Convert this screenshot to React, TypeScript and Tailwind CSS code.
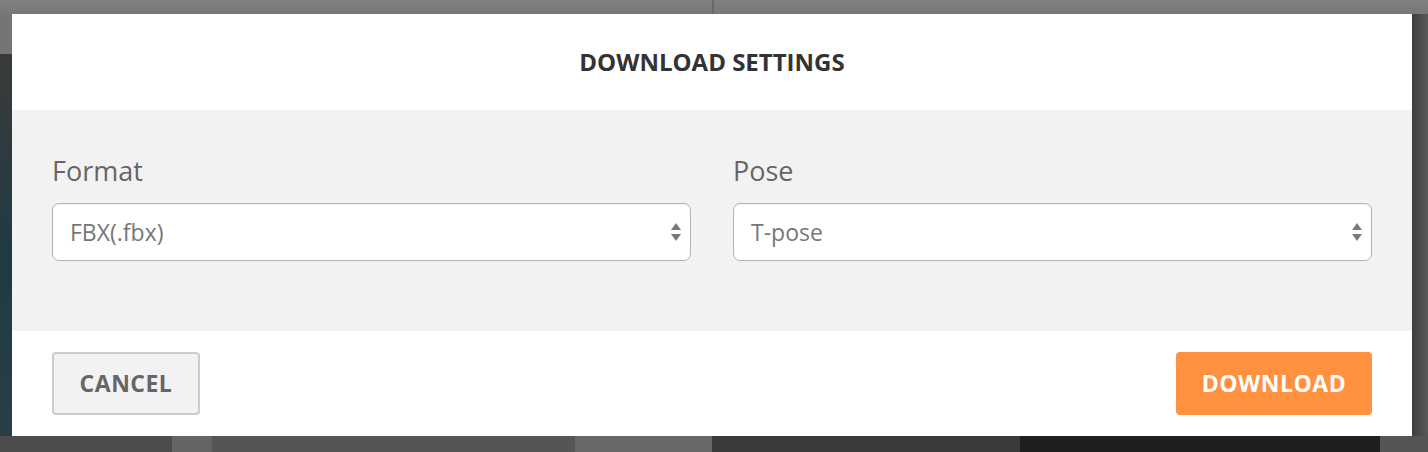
import React from 'react';

const font = { fontFamily: '"Open Sans", "Noto Sans", sans-serif' };

const SelectArrows: React.FC = () => (
  <svg width="12" height="20" viewBox="0 0 12 20" className="shrink-0">
    <path d="M6 1 L11 8 L1 8 Z" fill="#7a7a7a" />
    <path d="M1 12 L11 12 L6 19 Z" fill="#7a7a7a" />
  </svg>
);

const Field: React.FC<{ label: string; value: string }> = ({ label, value }) => (
  <div className="flex-1 flex flex-col gap-[16px]">
    <label className="text-[27px] leading-[32px] text-[#666]">{label}</label>
    <div className="h-[58px] bg-white border-[1.5px] border-[#b5b5b5] rounded-[7px] flex items-center justify-between pl-[17px] pr-[8px] shadow-[inset_0_1px_2px_rgba(0,0,0,0.06)]">
      <span className="text-[23px] text-[#777]">{value}</span>
      <SelectArrows />
    </div>
  </div>
);

export default function App() {
  return (
    <div style={font} className="relative w-[1428px] h-[452px] overflow-hidden bg-[#3c3c3c]">
      {/* dimmed page behind the dialog */}
      <div className="absolute inset-x-0 top-0 h-[14px] bg-gradient-to-b from-[#808080] to-[#777]" />
      <div className="absolute left-[712px] top-0 h-[14px] w-[2px] bg-[#6a6a6a]" />
      <div className="absolute left-0 top-[14px] w-[12px] h-[40px] bg-[#757575]" />
      <div className="absolute left-0 top-[54px] w-[12px] h-[398px] bg-gradient-to-b from-[#3a3a3a] via-[#1f3a44] to-[#2a3f48]" />
      <div className="absolute right-0 top-[14px] w-[16px] h-[438px] bg-gradient-to-r from-[#3d3d3d] to-[#5a5a5a]" />
      <div className="absolute left-0 bottom-0 h-[16px] w-full flex">
        <div className="w-[172px] bg-[#4c4c4c]" />
        <div className="w-[40px] bg-[#656565]" />
        <div className="w-[363px] bg-[#555]" />
        <div className="w-[137px] bg-[#686868]" />
        <div className="w-[308px] bg-[#3a3a3a]" />
        <div className="w-[360px] bg-[#1f1f1f]" />
        <div className="flex-1 bg-[#555]" />
      </div>

      {/* dialog */}
      <div className="absolute left-[12px] top-[14px] w-[1400px] h-[422px] bg-white flex flex-col">
        <div className="h-[96px] flex items-center justify-center">
          <h2 className="text-[24px] font-bold text-[#333]">DOWNLOAD SETTINGS</h2>
        </div>
        <div className="h-[221px] bg-[#f2f2f2] px-[40px] pt-[45px] flex gap-[42px]">
          <Field label="Format" value="FBX(.fbx)" />
          <Field label="Pose" value="T-pose" />
        </div>
        <div className="flex-1 flex items-start justify-between px-[40px] pt-[21px]">
          <button className="w-[148px] h-[63px] bg-[#f2f2f2] border-2 border-[#ccc] rounded-[4px] text-[23px] font-bold text-[#666] tracking-[0.5px]">
            CANCEL
          </button>
          <button className="w-[196px] h-[63px] bg-[#ff913f] rounded-[4px] text-[23px] font-bold text-white tracking-[0.5px]">
            DOWNLOAD
          </button>
        </div>
      </div>
    </div>
  );
}
